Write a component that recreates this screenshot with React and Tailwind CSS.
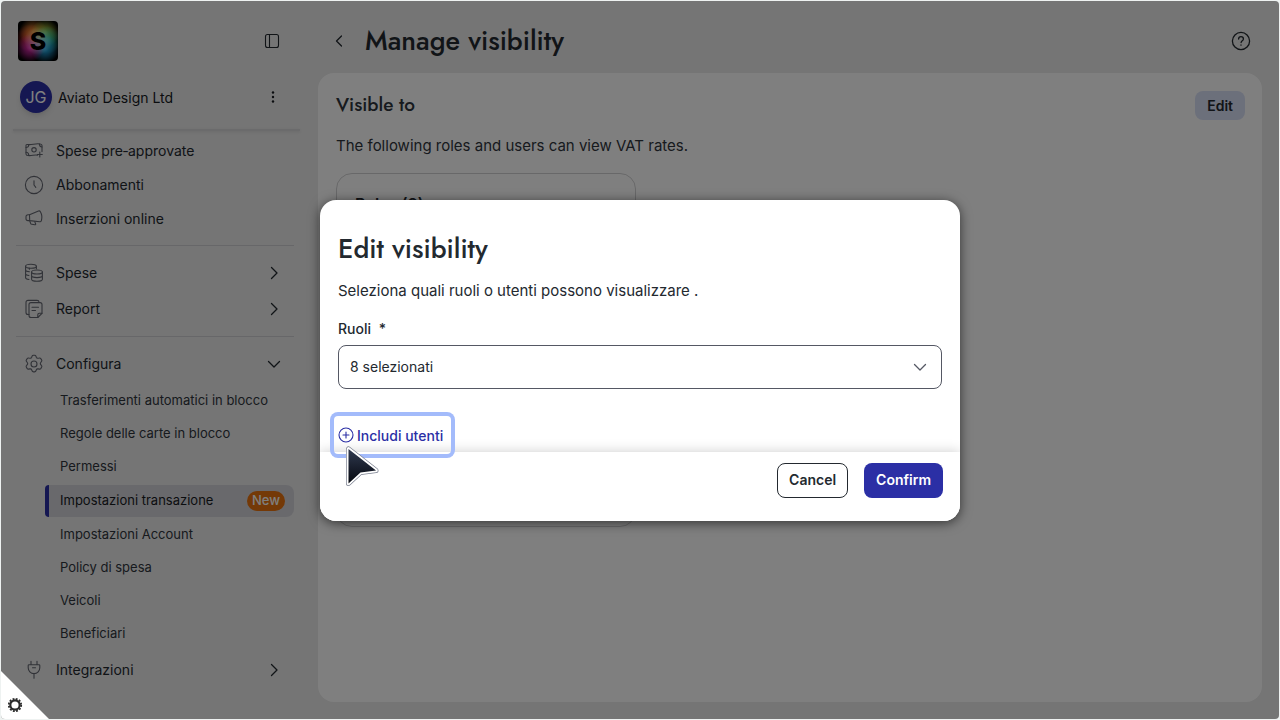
import clsx from "clsx";

const topItems = [
  { label: "Spese pre\u2011approvate", icon: CashIcon },
  { label: "Abbonamenti", icon: ClockIcon },
  { label: "Inserzioni online", icon: MegaphoneIcon },
];

const groupItems = [
  { label: "Spese", icon: CoinsIcon },
  { label: "Report", icon: ReportIcon },
];

const configItems = [
  { label: "Trasferimenti automatici in blocco" },
  { label: "Regole delle carte in blocco" },
  { label: "Permessi" },
  { label: "Impostazioni transazione", active: true, badge: "New" },
  { label: "Impostazioni Account" },
  { label: "Policy di spesa" },
  { label: "Veicoli" },
  { label: "Beneficiari" },
];

function Icon({ size = 20, viewBox = "0 0 20 20", className, children }) {
  return (
    <svg
      width={size}
      height={size}
      viewBox={viewBox}
      fill="none"
      stroke="currentColor"
      strokeWidth="1.1"
      strokeLinecap="round"
      strokeLinejoin="round"
      className={clsx("shrink-0", className)}
      aria-hidden="true"
    >
      {children}
    </svg>
  );
}

function CashIcon() {
  return (
    <Icon>
      <path d="M13.5 14.2c-3-.7-6 .9-9.5.3-1.4-.2-2-.7-2-1.6V4.6c0-.9.6-1.3 1.6-1.1C8 4.200 11.500 2 16.300 3c1.200.2 1.700.7 1.700 1.600v6" />
      <circle cx="10" cy="8.800" r="2.200" />
      <path d="M2 6.500c1.600 0 2.700-1 2.800-2.700M18 6c-1.500 0-2.500-1.100-2.600-3M2 11.300c1.600 0 2.700 1.200 2.800 3M15.800 11v5M13.300 13.500h5" />
    </Icon>
  );
}

function ClockIcon() {
  return (
    <Icon>
      <circle cx="10" cy="10" r="8.600" />
      <path d="M10 5.800V10l1.800 2.300" />
    </Icon>
  );
}

function MegaphoneIcon() {
  return (
    <Icon>
      <path d="M5.500 5.800 14.500 2c.8-.3 1.500 0 1.900.7 1.600 2.800 1.900 5.700 1 9-.2.8-.9 1.200-1.700 1L5.700 11.600z" />
      <path d="M5.500 5.800H4C2.700 5.800 2 6.600 2 7.700v2c0 1.200.7 1.900 2 1.900h1.700M5.600 11.600l1 2.700c.2.600.6.9 1.200 1l3 .5c.8.100 1.100-.4.8-1.100l-.8-1.800" />
    </Icon>
  );
}

function CoinsIcon() {
  return (
    <Icon>
      <ellipse cx="7" cy="3.200" rx="5.400" ry="2" />
      <path d="M1.600 3.200v11.500c0 .9 1.300 1.500 3.400 1.800M12.400 3.200v2.600M1.600 7c0 .8 1.400 1.500 3.800 1.700M1.600 10.800c0 .8 1.200 1.500 3.300 1.700M5.400 5.200v1" />
      <ellipse cx="13" cy="9" rx="5.400" ry="2" />
      <path d="M7.600 9v7.300c0 1.100 2.300 2 5.400 2s5.400-.9 5.400-2V9M7.600 12.600c0 1.100 2.300 2 5.400 2s5.400-.9 5.400-2" />
    </Icon>
  );
}

function ReportIcon() {
  return (
    <Icon>
      <path d="M5 15.500H4a2 2 0 0 1-2-2V3.400a2 2 0 0 1 2-2h9c1.200 0 2 .7 2.100 1.800" />
      <path d="M7 3.600h9a2 2 0 0 1 2 2v8.700l-4.200 4.200H7a2 2 0 0 1-2-2V5.600a2 2 0 0 1 2-2z" />
      <path d="M18 14.300h-2.700c-1 0-1.500.5-1.500 1.500v2.700M8 8.200h6.500M8 11.500h3.500" />
    </Icon>
  );
}

function GearIcon() {
  return (
    <Icon>
      <circle cx="10" cy="10" r="3" />
      <path d="M7.700 3.200 8 2.300c.3-.7.800-1.100 1.500-1.100h1c.7 0 1.200.4 1.500 1.100l.3.900c.3.800 1 1.200 1.900 1l1-.2c.7-.2 1.300.1 1.700.7l.7 1.200c.4.600.3 1.300-.2 1.800l-.7.800c-.6.700-.6 1.400 0 2.100l.7.800c.5.500.6 1.200.2 1.800l-.7 1.200c-.4.600-1 .9-1.700.7l-1-.2c-.9-.2-1.600.200-1.900 1l-.3.900c-.3.700-.8 1.100-1.500 1.100h-1c-.7 0-1.200-.4-1.500-1.100l-.3-.9c-.3-.8-1-1.200-1.900-1l-1 .2c-.7.200-1.300-.1-1.700-.7l-.7-1.200c-.4-.6-.3-1.300.2-1.800l.7-.8c.6-.7.6-1.400 0-2.100l-.7-.8c-.5-.5-.6-1.200-.2-1.800l.7-1.200c.4-.6 1-.9 1.700-.7l1 .2c.9.200 1.600-.2 1.900-1z" />
    </Icon>
  );
}

function PlugIcon() {
  return (
    <Icon>
      <path d="M7 1.200v3.500M13 1.200v3.500M5 4.700h10c.5 0 .8.300.8.800v2.300c0 3-2.400 5.800-5.800 5.800S4.200 10.800 4.200 7.800V5.500c0-.5.300-.8.800-.8zM10 13.600v4.600M8.500 7.700h3" />
    </Icon>
  );
}

function Chevron({ down, className = "text-[#23292f]" }) {
  return (
    <Icon size={16} viewBox="0 0 16 16" className={className}>
      <path d={down ? "M2.500 5.500 8 11l5.500-5.500" : "M5.500 2.500 11 8l-5.500 5.500"} strokeWidth="1.300" />
    </Icon>
  );
}

function Logo() {
  const glows = [
    { id: "red", x: 12, y: 17, c: "#ff3b30" },
    { id: "orange", x: 15, y: 11, c: "#ff9636" },
    { id: "lime", x: 27, y: 12, c: "#d8f04c" },
    { id: "teal", x: 29, y: 19, c: "#25d8b4" },
    { id: "blue", x: 27, y: 28, c: "#26b9ff" },
    { id: "pink", x: 12, y: 27, c: "#f22ec2" },
    { id: "glare", x: 20, y: 20, c: "#ffffff" },
  ];
  return (
    <svg width="40" height="40" viewBox="0 0 40 40" className="rounded" role="img" aria-label="Logo">
      <defs>
        {glows.map((g) => (
          <radialGradient key={g.id} id={g.id}>
            <stop offset="0" stopColor={g.c} />
            <stop offset="0.450" stopColor={g.c} stopOpacity="0.600" />
            <stop offset="1" stopColor={g.c} stopOpacity="0" />
          </radialGradient>
        ))}
      </defs>
      <rect width="40" height="40" fill="#000" />
      {glows.map((g) => (
        <circle
          key={g.id}
          cx={g.x}
          cy={g.y}
          r="14"
          fill={`url(#${g.id})`}
          opacity={g.id === "glare" ? 0.6 : 0.9}
        />
      ))}
      <text
        x="20"
        y="29"
        textAnchor="middle"
        className="fill-black font-[Inter,sans-serif] text-[25px] font-extrabold"
      >
        S
      </text>
    </svg>
  );
}

function NavRow({ label, icon: RowIcon, chevron, open }) {
  return (
    <a href="#" className="flex h-9 items-center gap-3 pr-3 pl-2 text-sm text-[#23292f]">
      <span className="text-[#62656f]">
        <RowIcon />
      </span>
      <span className="grow">{label}</span>
      {chevron && <Chevron down={open} />}
    </a>
  );
}

function Sidebar() {
  return (
    <aside className="flex w-[305px] shrink-0 flex-col pt-5">
      <div className="flex items-center justify-between pr-[26px] pl-[17px]">
        <Logo />
        <button type="button" aria-label="Toggle sidebar" className="text-[#23292f]">
          <Icon size={16} viewBox="0 0 16 16">
            <rect x="1.500" y="1.500" width="13" height="13" rx="2" />
            <path d="M5.500 1.500v13" />
          </Icon>
        </button>
      </div>
      <div className="mt-5 flex items-center pr-[25px] pl-[19px]">
        <span className="flex size-8 items-center justify-center rounded-full bg-[#2b2fa5] text-base text-white shadow-md">
          JG
        </span>
        <span className="ml-1.5 grow pt-0.5 text-sm text-[#171a1f]">Aviato Design Ltd</span>
        <button type="button" aria-label="Account menu" className="text-[#171a1f]">
          <svg width="16" height="16" viewBox="0 0 16 16" fill="currentColor">
            <circle cx="8" cy="3.500" r="1.200" />
            <circle cx="8" cy="8" r="1.200" />
            <circle cx="8" cy="12.500" r="1.200" />
          </svg>
        </button>
      </div>
      <div className="mt-4 ml-3 h-0.5 w-[287px] bg-[#d6d6d8] shadow-sm" />

      <nav className="ml-[15px] w-[278px]">
        <div className="flex flex-col pt-0.5 pb-2">
          {topItems.map((item) => (
            <div key={item.label} className="-mb-0.5 last:mb-0">
              <NavRow {...item} />
            </div>
          ))}
        </div>
        <div className="border-y border-[#cfcfd2] py-[9px]">
          {groupItems.map((item) => (
            <NavRow key={item.label} {...item} chevron />
          ))}
        </div>
        <div className="pt-[9px]">
          <NavRow label="Configura" icon={GearIcon} chevron open />
        </div>
        <ul className="mt-[3px] ml-[29px] flex flex-col gap-px text-[13px]">
          {configItems.map((item) => (
            <li key={item.label} className={clsx(item.active && "my-px")}>
              <a
                href="#"
                className={clsx(
                  "flex h-8 items-center justify-between pr-[9px] pl-[11px]",
                  item.active
                    ? "rounded-lg rounded-l border-l-4 border-[#2b2fa5] bg-[#d3d3d9] text-[#171a1f]"
                    : "ml-1 text-[#2f353c]"
                )}
              >
                {item.label}
                {item.badge && (
                  <span className="flex h-5 items-center rounded-full bg-[#e8730e] px-[5px] font-medium text-white">
                    {item.badge}
                  </span>
                )}
              </a>
            </li>
          ))}
        </ul>
        <div className="pt-0.5">
          <NavRow label="Integrazioni" icon={PlugIcon} chevron />
        </div>
      </nav>
    </aside>
  );
}

function Main() {
  return (
    <main className="flex min-w-0 grow flex-col pr-[17px] pb-[17px] pl-3">
      <header className="flex h-[72px] items-center pt-2 pr-[11px] pl-[13px]">
        <button type="button" aria-label="Back" className="text-[#23292f]">
          <Icon size={16} viewBox="0 0 16 16">
            <path d="M10.500 3 5.500 8l5 5" strokeWidth="1.300" />
          </Icon>
        </button>
        <h1 className="ml-[18px] grow font-[Jost,Lato,sans-serif] text-[27px] font-medium text-[#23292f]">
          Manage visibility
        </h1>
        <button type="button" aria-label="Help" className="text-[#23292f]">
          <Icon>
            <circle cx="10" cy="10" r="8.600" strokeWidth="1.300" />
            <path d="M7.600 8c0-1.400 1-2.300 2.400-2.300s2.400.9 2.400 2.200c0 1.800-2.300 1.900-2.300 3.700M10 14v.2" strokeWidth="1.300" />
          </Icon>
        </button>
      </header>
      <section className="grow rounded-2xl bg-white pt-[18px] pr-[17px] pl-[18px]">
        <div className="flex items-start justify-between">
          <h2 className="font-[Jost,Lato,sans-serif] text-[19px] leading-7 font-medium text-[#2f353c]">Visible to</h2>
          <button
            type="button"
            className="h-[29px] rounded-lg bg-[#d9e0f7] px-3 text-sm font-semibold text-[#23292f]"
          >
            Edit
          </button>
        </div>
        <p className="mt-3.5 text-[15px] leading-6 text-[#2f353c]">
          The following roles and users can view VAT rates.
        </p>
        <div className="mt-[15px] h-[354px] w-[300px] rounded-2xl border border-[#d0d0d2] px-[18px] pt-[18px]">
          <h3 className="text-base font-semibold text-[#23292f]">Roles (8)</h3>
        </div>
      </section>
    </main>
  );
}

function EditDialog() {
  return (
    <div
      role="dialog"
      aria-labelledby="dialog-title"
      className="relative flex w-[640px] flex-col overflow-hidden rounded-2xl bg-white text-[#23292f] shadow-[0_2px_12px_rgba(0,0,0,0.6)]"
    >
      <div className="px-[18px] pt-7">
        <h2 id="dialog-title" className="font-[Jost,Lato,sans-serif] text-[27px] leading-[42px] font-medium">
          Edit visibility
        </h2>
        <p className="mt-[9px] text-[15px] leading-6">Seleziona quali ruoli o utenti possono visualizzare .</p>
        <label htmlFor="roles" className="mt-4 block text-sm font-medium">
          Ruoli <span className="ml-1">*</span>
        </label>
        <div className="relative mt-1.5">
          <select
            id="roles"
            className="h-11 w-full appearance-none rounded-lg border border-[#555864] bg-white px-[11px] text-sm"
          >
            <option>8 selezionati</option>
          </select>
          <span className="pointer-events-none absolute inset-y-0 right-3.5 flex items-center">
            <Chevron down className="text-[#555864]" />
          </span>
        </div>
        <button
          type="button"
          className="relative z-10 mt-[27px] -ml-1 flex h-[38px] items-center gap-[3px] rounded pr-2 pl-1 text-sm font-medium text-[#2b2fa5] ring-4 ring-[#a3bbfb]"
        >
          <Icon size={16} viewBox="0 0 16 16">
            <circle cx="8" cy="8" r="7" />
            <path d="M8 5v6M5 8h6" />
          </Icon>
          <span className="pt-0.5">Includi utenti</span>
        </button>
      </div>
      <div className="-mt-0.5 flex justify-end gap-4 bg-white px-[17px] pt-[11px] pb-[23px] shadow-[0_0_12px_rgba(0,0,0,0.2)]">
        <button type="button" className="h-[35px] rounded-lg border border-[#23292f] px-[11px] text-sm font-semibold">
          Cancel
        </button>
        <button type="button" className="h-[35px] rounded-lg bg-[#2b2fa5] px-3 text-sm font-semibold text-white">
          Confirm
        </button>
      </div>
      <svg width="36" height="44" viewBox="0 0 36 44" className="absolute top-[244px] left-6 z-20" aria-hidden="true">
        <defs>
          <linearGradient id="pointer" x1="0" y1="0" x2="0" y2="1">
            <stop offset="0" stopColor="#303a50" />
            <stop offset="1" stopColor="#05080f" />
          </linearGradient>
        </defs>
        <g strokeLinejoin="round">
          <path d="M4.500 5V39.500L16.500 28.500 32 26.500Z" stroke="#7b8090" strokeWidth="5" />
          <path d="M4.500 5V39.500L16.500 28.500 32 26.500Z" stroke="#fff" strokeWidth="3.600" />
          <path d="M4.500 5V39.500L16.500 28.500 32 26.500Z" fill="url(#pointer)" />
        </g>
      </svg>
    </div>
  );
}

export default function App() {
  return (
    <div className="min-h-screen bg-[#eef2f1] p-px font-[Inter,sans-serif] antialiased">
      <div className="relative flex min-h-[calc(100vh-2px)] overflow-hidden rounded bg-[#eaeaea]">
        <Sidebar />
        <Main />
        <div className="absolute inset-0 flex items-center justify-center bg-black/50">
          <EditDialog />
        </div>
        <button type="button" aria-label="Settings" className="absolute bottom-0 left-0">
          <svg width="48" height="48" viewBox="0 0 48 48">
            <path d="M0 0 48 48H0z" fill="#fff" />
            <circle cx="14" cy="34" r="4.700" fill="none" stroke="#2b2b2b" strokeWidth="2.200" />
            <circle
              cx="14"
              cy="34"
              r="6.200"
              fill="none"
              stroke="#2b2b2b"
              strokeWidth="1.800"
              strokeDasharray="1.900 1.346"
            />
          </svg>
        </button>
      </div>
    </div>
  );
}
